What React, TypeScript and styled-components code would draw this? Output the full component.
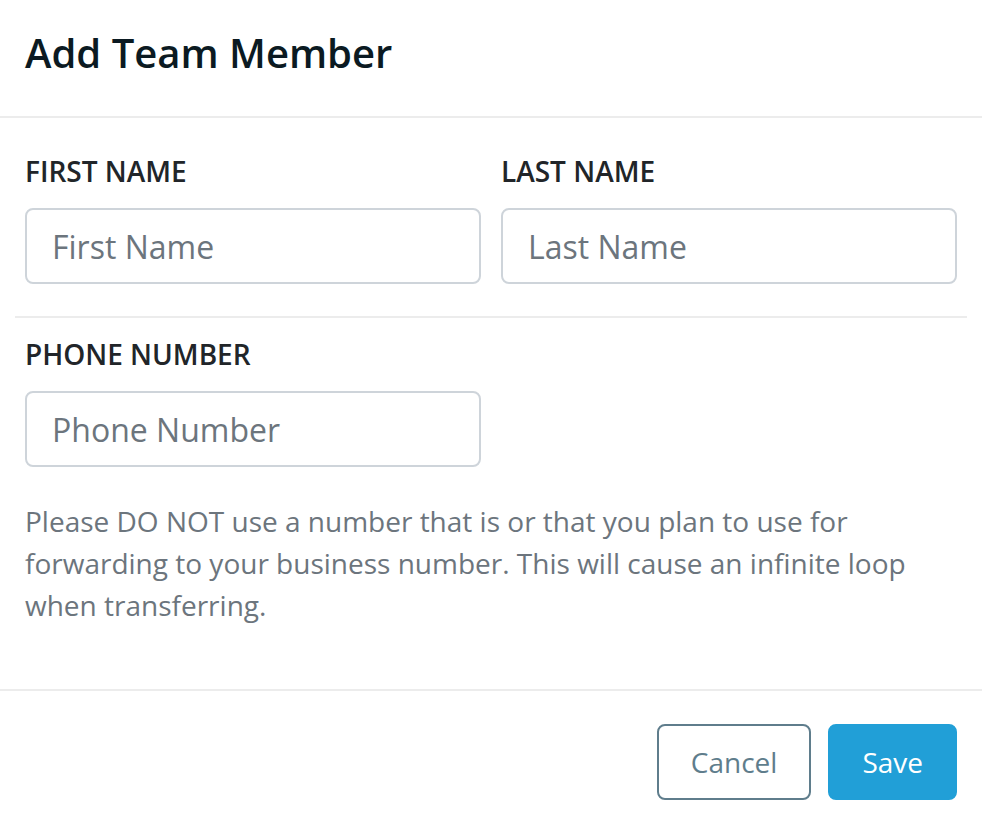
import styled, { createGlobalStyle } from "styled-components";

const GlobalStyle = createGlobalStyle`
  html, body {
    margin: 0;
    padding: 0;
    background: #ffffff;
  }
  body {
    font-family: "Open Sans", "Liberation Sans", sans-serif;
    -webkit-font-smoothing: antialiased;
  }
  * {
    box-sizing: border-box;
  }
`;

const Modal = styled.div`
  width: 982px;
  min-height: 824px;
  background: #fff;
  display: flex;
  flex-direction: column;
`;

const Header = styled.div`
  padding: 29px 25px 39px;
  border-bottom: 2px solid #ececec;
`;

const Title = styled.h1`
  margin: 0;
  font-size: 40px;
  line-height: 48px;
  font-weight: 600;
  color: #0b1a22;
`;

const Body = styled.div`
  padding: 38px 0 0;
`;

const Row = styled.div`
  display: grid;
  grid-template-columns: 1fr 1fr;
  column-gap: 20px;
  padding: 0 25px;
`;

const Field = styled.div`
  display: flex;
  flex-direction: column;
`;

const Label = styled.label`
  font-size: 28px;
  line-height: 31px;
  font-weight: 600;
  color: #212529;
  margin-bottom: 21px;
`;

const Input = styled.input`
  height: 76px;
  width: 100%;
  border: 2px solid #ced4da;
  border-radius: 8px;
  padding: 0 25px;
  font-family: inherit;
  font-size: 32px;
  color: #495057;
  outline: none;
  &::placeholder {
    color: #6c757d;
  }
`;

const Divider = styled.hr`
  margin: 32px 15px 21px;
  border: none;
  border-top: 2px solid #ececec;
`;

const Help = styled.p`
  margin: 33px 25px 0;
  font-size: 28px;
  line-height: 42px;
  color: #6c757d;
`;

const Footer = styled.div`
  margin-top: 63px;
  border-top: 2px solid #ececec;
  padding: 33px 25px 24px;
  display: flex;
  justify-content: flex-end;
  gap: 17px;
`;

const Button = styled.button<{ $primary?: boolean }>`
  height: 76px;
  padding: 0 32px;
  border-radius: 8px;
  font-family: inherit;
  font-size: 28px;
  font-weight: 400;
  cursor: pointer;
  border: 2px solid ${(p) => (p.$primary ? "#219fd7" : "#5f7d8c")};
  background: ${(p) => (p.$primary ? "#219fd7" : "#fff")};
  color: ${(p) => (p.$primary ? "#fff" : "#5f7d8c")};
`;

export default function App() {
  return (
    <>
      <GlobalStyle />
      <Modal>
        <Header>
          <Title>Add Team Member</Title>
        </Header>
        <Body>
          <Row>
            <Field>
              <Label>FIRST NAME</Label>
              <Input placeholder="First Name" />
            </Field>
            <Field>
              <Label>LAST NAME</Label>
              <Input placeholder="Last Name" />
            </Field>
          </Row>
          <Divider />
          <Row>
            <Field>
              <Label>PHONE NUMBER</Label>
              <Input placeholder="Phone Number" />
            </Field>
          </Row>
          <Help>
            Please DO NOT use a number that is or that you plan to use for
            forwarding to your business number. This will cause an infinite
            loop when transferring.
          </Help>
        </Body>
        <Footer>
          <Button>Cancel</Button>
          <Button $primary>Save</Button>
        </Footer>
      </Modal>
    </>
  );
}
